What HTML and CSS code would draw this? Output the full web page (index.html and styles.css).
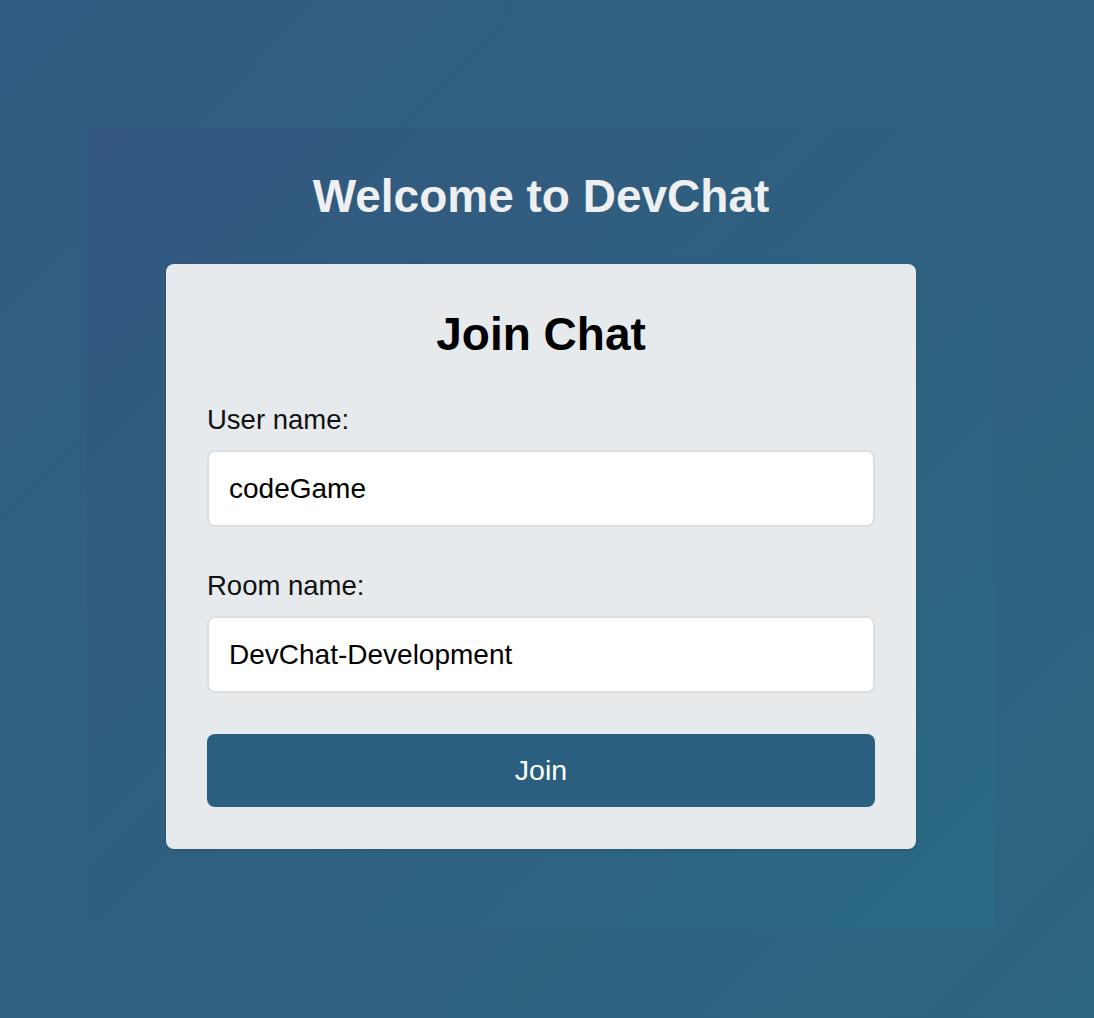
FILE: index.html
```html
<!DOCTYPE html>
<html>
<head>
<meta charset="utf-8">
<link rel="stylesheet" href="styles.css">
</head>
<body>
<div class="page">
  <div class="outer">
    <h1 class="title">Welcome to DevChat</h1>
    <div class="card">
      <h2 class="card-title">Join Chat</h2>
      <label class="label">User name:</label>
      <div class="input">codeGame</div>
      <label class="label label-second">Room name:</label>
      <div class="input">DevChat-Development</div>
      <button class="btn">Join</button>
    </div>
  </div>
</div>
</body>
</html>
```

FILE: styles.css
```css
html, body {
  margin: 0;
  padding: 0;
}
body {
  width: 1094px;
  height: 1018px;
  overflow: hidden;
  background: linear-gradient(135deg, #325c81 0%, #2f6180 50%, #2c6580 100%);
  font-family: "Liberation Sans", Arial, sans-serif;
}
.page {
  padding-top: 128px;
  padding-left: 87px;
}
.outer {
  width: 908px;
  height: 801px;
  box-sizing: border-box;
  border-radius: 12px;
  background: linear-gradient(135deg, #33577f 0%, #2f607f 50%, #2a6983 100%);
  padding: 0 79px;
  display: flex;
  flex-direction: column;
}
.title {
  margin: 0;
  margin-top: 44px;
  height: 48px;
  line-height: 48px;
  font-size: 46px;
  font-weight: bold;
  color: #eeeff1;
  text-align: center;
}
.card {
  margin-top: 44px;
  background: #e6eaed;
  border-radius: 8px;
  box-shadow: 0 1px 3px rgba(0,0,0,0.15);
  padding: 46px 41px 42px;
  display: flex;
  flex-direction: column;
}
.card-title {
  margin: 0;
  height: 48px;
  line-height: 48px;
  font-size: 46px;
  font-weight: bold;
  color: #000;
  text-align: center;
}
.label {
  margin-top: 48px;
  height: 28px;
  line-height: 28px;
  font-size: 27.5px;
  color: #111;
}
.label-second {
  margin-top: 45px;
}
.input {
  margin-top: 16px;
  height: 77px;
  box-sizing: border-box;
  background: #fff;
  border: 2px solid #dcdfe2;
  border-radius: 8px;
  padding: 0 20px;
  display: flex;
  align-items: center;
  font-size: 28px;
  color: #000;
}
.btn {
  margin-top: 41px;
  height: 73px;
  border: none;
  border-radius: 8px;
  background: #2a5f80;
  color: #fff;
  font-family: "Liberation Sans", Arial, sans-serif;
  font-size: 28.5px;
  cursor: pointer;
}
```
